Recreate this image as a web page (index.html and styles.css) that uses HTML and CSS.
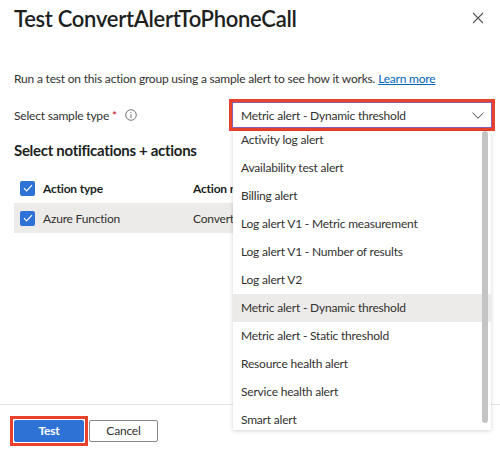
FILE: index.html
```html
<!DOCTYPE html>
<html>
<head>
<meta charset="utf-8">
<link rel="stylesheet" href="styles.css">
</head>
<body>
<div class="panel">
  <header class="head">
    <h1 class="title">Test ConvertAlertToPhoneCall</h1>
    <svg class="close" width="12" height="12" viewBox="0 0 12 12"><path d="M1 1L11 11M11 1L1 11" stroke="#555" stroke-width="1.1"/></svg>
  </header>
  <p class="desc">Run a test on this action group using a sample alert to see how it works. <a class="link" href="#">Learn more</a></p>
  <div class="field">
    <div class="label">Select sample type <span class="req">*</span>
      <svg class="info" width="12" height="12" viewBox="0 0 12 12"><circle cx="6" cy="6" r="5.3" fill="none" stroke="#666" stroke-width="0.9"/><path d="M6 5.2V9" stroke="#666" stroke-width="0.9"/><circle cx="6" cy="3.5" r="0.6" fill="#666"/></svg>
    </div>
    <div class="hl hl-select">
      <div class="select">
        <span>Metric alert - Dynamic threshold</span>
        <svg class="chev" width="12" height="7" viewBox="0 0 12 7"><path d="M0.5 0.8L6 6.2L11.5 0.8" fill="none" stroke="#444" stroke-width="1"/></svg>
      </div>
    </div>
  </div>
  <h2 class="subhead">Select notifications + actions</h2>
  <div class="table">
    <div class="trow thead">
      <span class="cb"><svg width="10" height="8" viewBox="0 0 10 8"><path d="M1 4.2L3.6 6.8L9 1.2" fill="none" stroke="#fff" stroke-width="1.2"/></svg></span>
      <span class="c1">Action type</span>
      <span class="c2">Action name</span>
    </div>
    <div class="trow tbody">
      <span class="cb"><svg width="10" height="8" viewBox="0 0 10 8"><path d="M1 4.2L3.6 6.8L9 1.2" fill="none" stroke="#fff" stroke-width="1.2"/></svg></span>
      <span class="c1">Azure Function</span>
      <span class="c2">ConvertAlertToPhoneCall</span>
    </div>
  </div>
  <footer class="foot">
    <div class="hl hl-btn"><button class="btn primary">Test</button></div>
    <button class="btn secondary">Cancel</button>
  </footer>
  <div class="menu">
    <ul class="options">
      <li>Activity log alert</li>
      <li>Availability test alert</li>
      <li>Billing alert</li>
      <li>Log alert V1 - Metric measurement</li>
      <li>Log alert V1 - Number of results</li>
      <li>Log alert V2</li>
      <li class="sel">Metric alert - Dynamic threshold</li>
      <li>Metric alert - Static threshold</li>
      <li>Resource health alert</li>
      <li>Service health alert</li>
      <li>Smart alert</li>
    </ul>
    <div class="scroll"></div>
  </div>
</div>
</body>
</html>
```
FILE: styles.css
```css
* { box-sizing: border-box; }
html, body { margin: 0; padding: 0; background: #fff; }
body {
  font-family: "Lato", "Open Sans", sans-serif;
  font-size: 12px;
  letter-spacing: -0.2px;
  color: #323130;
  width: 500px;
  height: 454px;
  overflow: hidden;
}
.panel { position: relative; width: 500px; height: 454px; }
.head {
  display: flex;
  align-items: center;
  justify-content: space-between;
  padding: 0 16px 0 14px;
  height: 36px;
}
.title {
  margin: 0;
  font-size: 22px;
  font-weight: 600;
  letter-spacing: -0.3px;
  color: #201f1e;
}
.desc {
  margin: 34px 0 0 14px;
  line-height: 18px;
  font-size: 12px;
}
.link { color: #0067b8; text-decoration: underline; }
.field {
  display: flex;
  align-items: center;
  justify-content: space-between;
  margin-top: 11px;
  padding: 0 5px 0 14px;
}
.label { display: flex; align-items: center; }
.req { color: #c50f1f; margin: 0 8px 0 3px; }
.hl { border: 3px solid #e8412c; }
.hl-select { width: 266px; height: 32px; }
.select {
  height: 26px;
  border: 1px solid #8a5fb3;
  display: flex;
  align-items: center;
  justify-content: space-between;
  padding: 0 7px 0 8px;
}
.subhead {
  margin: 9px 0 0 14px;
  font-size: 15px;
  font-weight: 700;
  letter-spacing: -0.3px;
  color: #201f1e;
  line-height: 20px;
}
.table { margin: 13px 0 0 14px; width: 219px; overflow: hidden; }
.trow {
  display: flex;
  align-items: center;
  height: 30px;
  padding-left: 6px;
  white-space: nowrap;
}
.thead { font-weight: 700; color: #201f1e; }
.tbody { background: #edebe9; }
.cb {
  width: 15px; height: 15px;
  background: #2f72d6;
  border-radius: 2px;
  display: flex; align-items: center; justify-content: center;
  flex: none;
}
.c1 { margin-left: 8px; width: 150px; flex: none; }
.c2 { flex: 1; min-width: 0; overflow: hidden; text-overflow: clip; }
.foot {
  position: absolute;
  left: 0; right: 0; bottom: 0;
  height: 50px;
  border-top: 1px solid #e5e5e5;
  display: flex;
  align-items: center;
  padding-left: 10px;
  padding-top: 2px;
}
.hl-btn { padding: 1px; }
.btn {
  font-family: inherit;
  font-size: 12px;
  letter-spacing: -0.2px;
  height: 22px;
  border-radius: 2px;
  padding: 0;
  margin: 0;
}
.primary {
  width: 70px;
  background: #2f72d6;
  border: 1px solid #2f72d6;
  color: #fff;
  font-weight: 700;
}
.secondary {
  width: 69px;
  background: #fff;
  border: 1px solid #8a8886;
  color: #323130;
  margin-left: 1px;
}
.menu {
  position: absolute;
  left: 233px;
  top: 131px;
  width: 258px;
  height: 299px;
  background: #fff;
  box-shadow: 0 1px 4px rgba(0,0,0,0.18);
  overflow: hidden;
}
.options {
  list-style: none;
  margin: -5px 0 0 0;
  padding: 0;
}
.options li {
  height: 28px;
  line-height: 28px;
  padding-left: 8px;
}
.options li.sel { background: #edebe9; }
.scroll {
  position: absolute;
  right: 3px;
  top: 0;
  bottom: 7px;
  width: 6px;
  background: #c4c4c4;
  border-radius: 3px;
}
```
